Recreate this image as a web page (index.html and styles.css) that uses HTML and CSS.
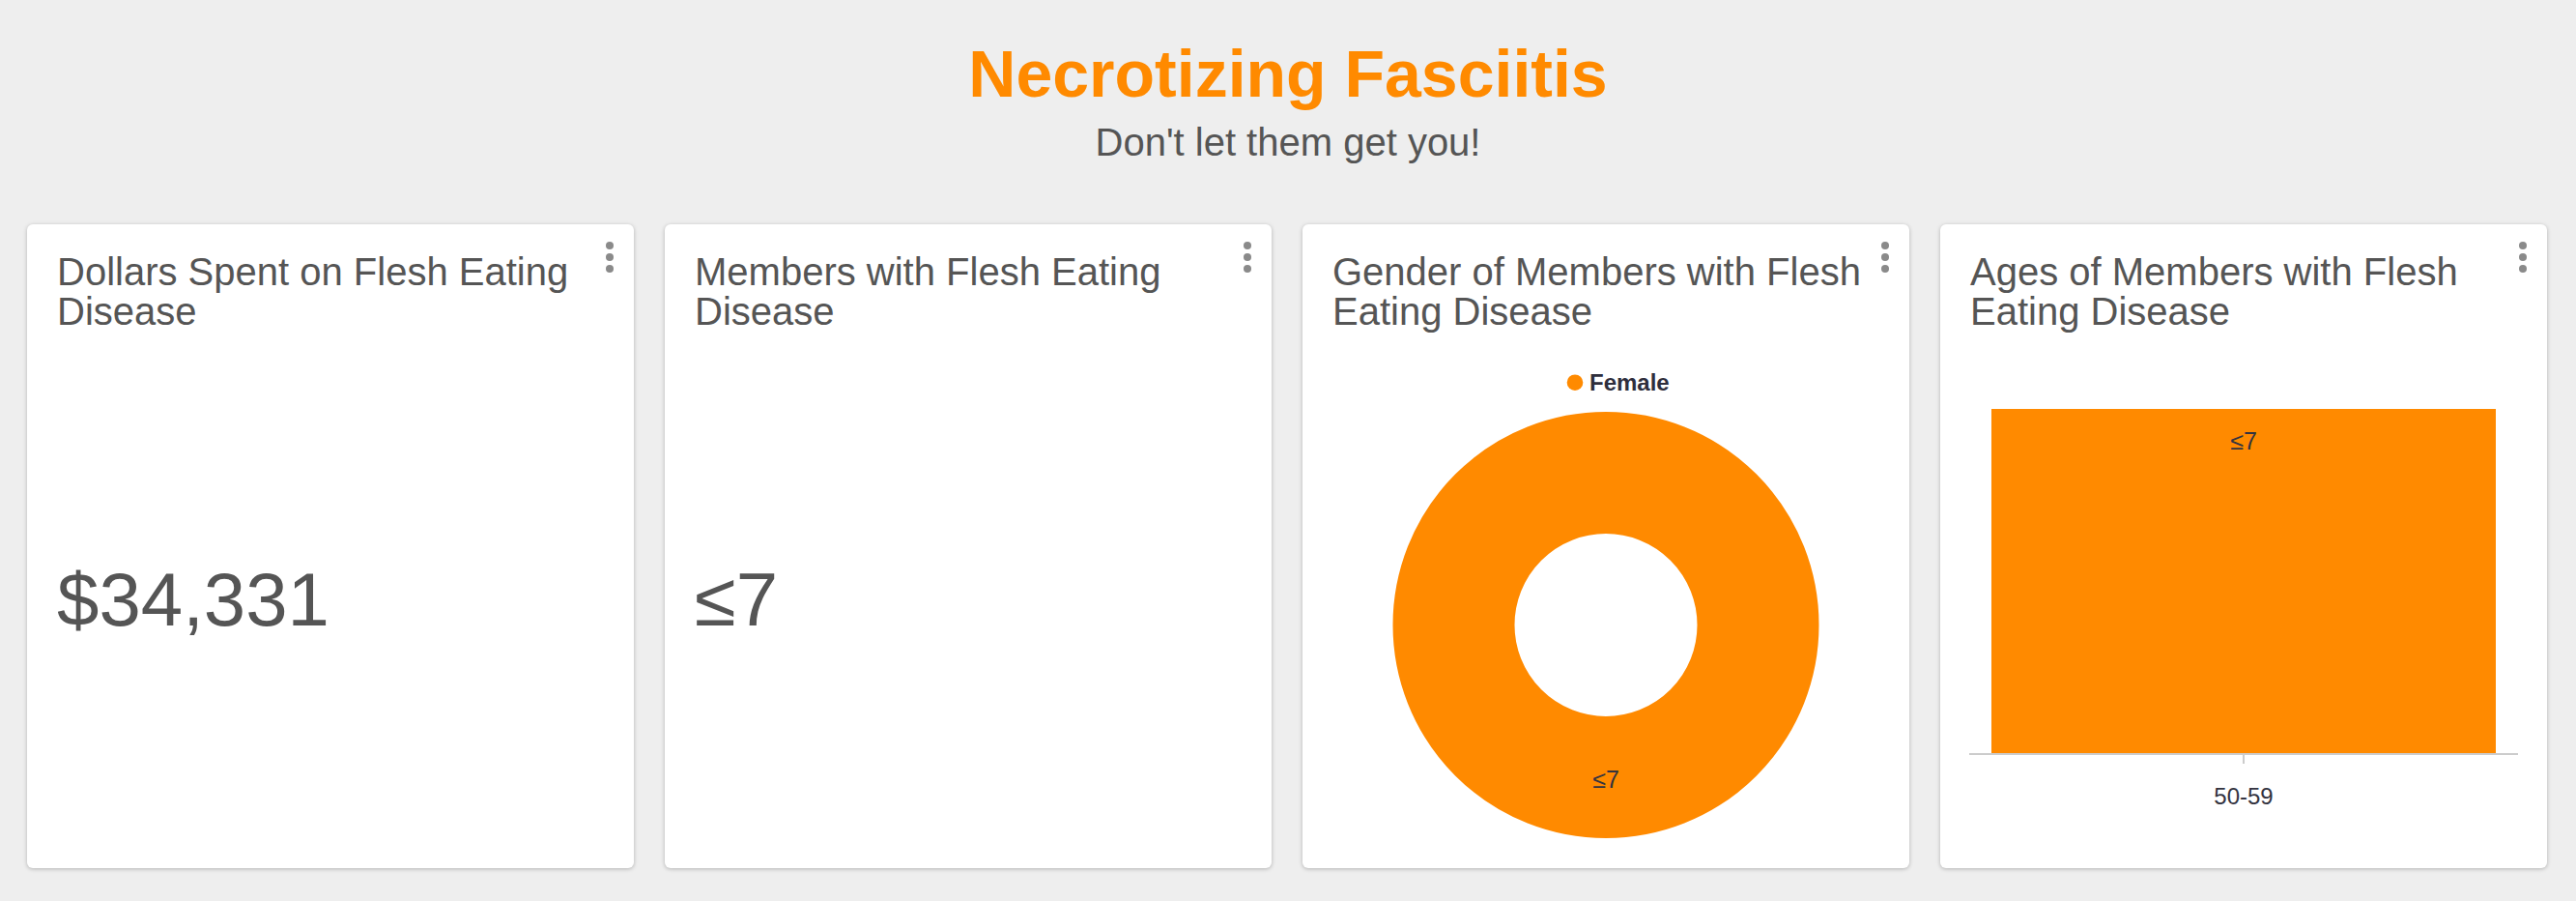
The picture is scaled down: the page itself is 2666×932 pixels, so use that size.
FILE: index.html
```html
<!DOCTYPE html>
<html lang="en">
<head>
<meta charset="utf-8">
<title>Necrotizing Fasciitis</title>
<link rel="stylesheet" href="styles.css">
</head>
<body>
<header class="hero">
  <h1 class="hero-title">Necrotizing Fasciitis</h1>
  <p class="hero-sub">Don't let them get you!</p>
</header>
<main class="grid">
  <section class="card">
    <div class="card-head">
      <h2 class="card-title">Dollars Spent on Flesh Eating Disease</h2>
      <span class="kebab"><i></i><i></i><i></i></span>
    </div>
    <div class="card-body value">$34,331</div>
  </section>
  <section class="card">
    <div class="card-head">
      <h2 class="card-title">Members with Flesh Eating Disease</h2>
      <span class="kebab"><i></i><i></i><i></i></span>
    </div>
    <div class="card-body value">&le;7</div>
  </section>
  <section class="card">
    <div class="card-head">
      <h2 class="card-title">Gender of Members with Flesh Eating Disease</h2>
      <span class="kebab"><i></i><i></i><i></i></span>
    </div>
    <div class="card-body chart">
      <svg class="chart-svg" width="628" height="555" viewBox="0 0 628 555">
        <circle cx="282" cy="52.7" r="8.3" fill="#ff8a00"/>
        <text class="legend" x="297" y="61">Female</text>
        <circle cx="314" cy="303.5" r="157.5" fill="none" stroke="#ff8a00" stroke-width="126"/>
        <text class="chart-label" x="314" y="472" text-anchor="middle">&le;7</text>
      </svg>
    </div>
  </section>
  <section class="card">
    <div class="card-head">
      <h2 class="card-title">Ages of Members with Flesh Eating Disease</h2>
      <span class="kebab"><i></i><i></i><i></i></span>
    </div>
    <div class="card-body chart">
      <svg class="chart-svg" width="628" height="555" viewBox="0 0 628 555">
        <rect x="53" y="80" width="522" height="356" fill="#ff8a00"/>
        <text class="chart-label" x="314" y="122" text-anchor="middle">&le;7</text>
        <rect x="30" y="436" width="568" height="2" fill="#cccccc"/>
        <rect x="313" y="438" width="2" height="9" fill="#cccccc"/>
        <text class="axis-label" x="314" y="489" text-anchor="middle">50-59</text>
      </svg>
    </div>
  </section>
</main>
</body>
</html>
```
FILE: styles.css
```css
html, body {
  margin: 0;
  padding: 0;
}
body {
  background: #eeeeee;
  font-family: "Liberation Sans", Arial, Helvetica, sans-serif;
  color: #555555;
  width: 2666px;
  height: 932px;
  overflow: hidden;
}
.hero {
  padding-top: 36px;
  text-align: center;
}
.hero-title {
  margin: 0;
  font-size: 68px;
  line-height: 80px;
  font-weight: 700;
  color: #ff8a00;
}
.hero-sub {
  margin: 9px 0 0;
  font-size: 40px;
  line-height: 45px;
  color: #555555;
}
.grid {
  display: grid;
  grid-template-columns: repeat(4, 628px);
  column-gap: 32px;
  padding: 0 30px 0 28px;
  margin-top: 62px;
}
.card {
  height: 666px;
  background: #ffffff;
  border-radius: 6px;
  box-shadow: 0 1px 4px rgba(0, 0, 0, 0.25);
  display: flex;
  flex-direction: column;
}
.card-head {
  display: flex;
  align-items: flex-start;
  gap: 8px;
  padding: 18px 21px 0 31px;
}
.card-title {
  flex: 1;
  margin: 11px 0 0;
  font-size: 40px;
  line-height: 41px;
  font-weight: 400;
  color: #555555;
}
.kebab {
  display: flex;
  flex-direction: column;
  gap: 4px;
  width: 8px;
}
.kebab i {
  display: block;
  width: 8px;
  height: 8px;
  border-radius: 50%;
  background: #8a8a8a;
}
.card-body {
  flex: 1;
}
.value {
  display: flex;
  align-items: center;
  padding-left: 31px;
  font-size: 78px;
  color: #555555;
}
.chart-svg {
  display: block;
}
.legend {
  font-family: "Liberation Sans", Arial, sans-serif;
  font-weight: 700;
  font-size: 24px;
  fill: #2e2e3c;
}
.chart-label {
  font-family: "Liberation Sans", Arial, sans-serif;
  font-size: 25px;
  fill: #333340;
}
.axis-label {
  font-family: "Liberation Sans", Arial, sans-serif;
  font-size: 24px;
  fill: #333340;
}
```
